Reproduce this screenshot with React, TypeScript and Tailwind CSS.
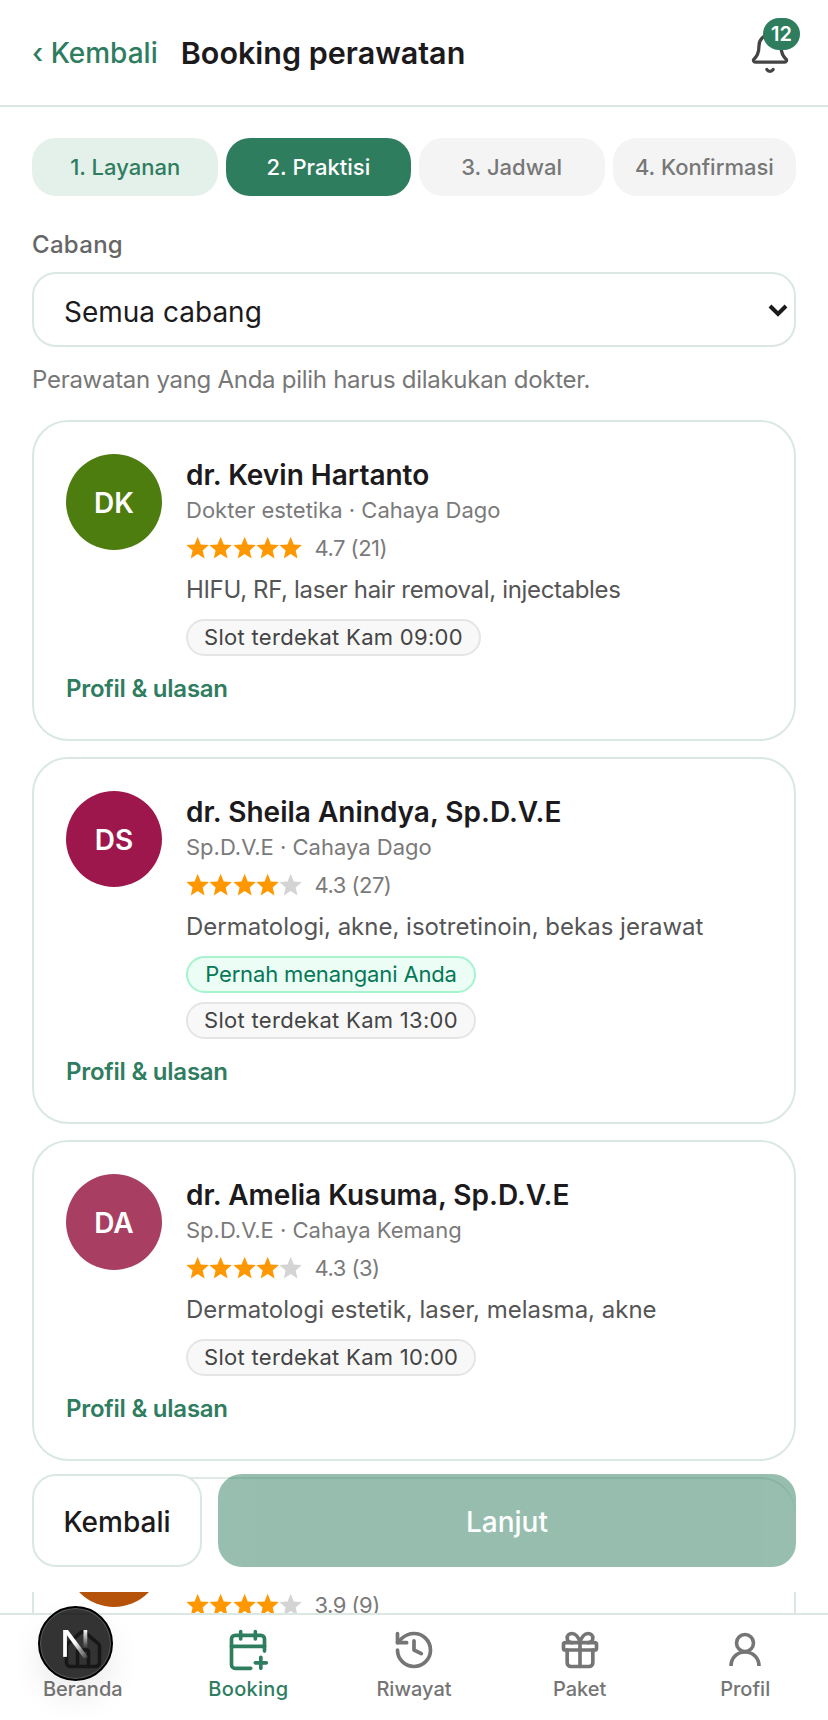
import { Bell, CalendarPlus, Gift, History, House } from 'lucide-react';
import type { ReactNode } from 'react';

type Doctor = {
  initials: string;
  name: string;
  role: string;
  stars: number;
  rating: string;
  specialties: string;
  specialtiesClass?: string;
  slot: string;
  treated?: boolean;
  avatar: string;
};

const doctors: Doctor[] = [
  {
    initials: 'DK',
    name: 'dr. Kevin Hartanto',
    role: 'Dokter estetika · Cahaya Dago',
    stars: 5,
    rating: '4.7 (21)',
    specialties: 'HIFU, RF, laser hair removal, injectables',
    specialtiesClass: 'tracking-[-0.34px]',
    slot: 'Slot terdekat Kam 09:00',
    avatar: 'bg-[#4d7c0f]',
  },
  {
    initials: 'DS',
    name: 'dr. Sheila Anindya, Sp.D.V.E',
    role: 'Sp.D.V.E · Cahaya Dago',
    stars: 4,
    rating: '4.3 (27)',
    specialties: 'Dermatologi, akne, isotretinoin, bekas jerawat',
    slot: 'Slot terdekat Kam 13:00',
    treated: true,
    avatar: 'bg-[#9d174d]',
  },
  {
    initials: 'DA',
    name: 'dr. Amelia Kusuma, Sp.D.V.E',
    role: 'Sp.D.V.E · Cahaya Kemang',
    stars: 4,
    rating: '4.3 (3)',
    specialties: 'Dermatologi estetik, laser, melasma, akne',
    slot: 'Slot terdekat Kam 10:00',
    avatar: 'bg-[#a83f63]',
  },
  {
    initials: 'DR',
    name: 'dr. Rendra Pratama',
    role: 'Dokter estetika · Cahaya Kemang',
    stars: 4,
    rating: '3.9 (9)',
    specialties: 'Laser, peeling, injectables',
    slot: 'Slot terdekat Kam 11:00',
    avatar: 'bg-[#b45309]',
  },
];

function Stars({ count }: { count: number }) {
  return (
    <div className="flex">
      {[0, 1, 2, 3, 4].map((i) => (
        <svg key={i} viewBox="0 0 24 24" className={`h-[24px] w-[23.3px] ${i < count ? 'fill-[#ff9800]' : 'fill-[#d4d4d4]'}`}>
          <path d="M12 .5l3.2 7.8 8.4.7-6.4 5.5 1.9 8.2-7.1-4.4-7.1 4.4 1.9-8.2L.4 9l8.4-.7z" />
        </svg>
      ))}
    </div>
  );
}

function DoctorCard({ doctor }: { doctor: Doctor }) {
  return (
    <div className="rounded-[36px] border-2 border-[#dbe8e2] bg-white px-[32px] pt-[32px] pb-[33px]">
      <div className="flex gap-[24px]">
        <div className={`flex h-[96px] w-[96px] shrink-0 items-center justify-center rounded-full pt-[2px] text-[28px] font-semibold text-white ${doctor.avatar}`}>
          {doctor.initials}
        </div>
        <div className="min-w-0 flex-1">
          <p className="text-[28px] leading-[43px] font-semibold text-[#1c1a1c]">{doctor.name}</p>
          <p className="text-[22px] leading-[26px] text-[#7a7a7a]">{doctor.role}</p>
          <div className="mt-[10px] flex h-[30px] items-center gap-[12px]">
            <Stars count={doctor.stars} />
            <span className="text-[22px] tracking-[-0.5px] text-[#7a7a7a]">{doctor.rating}</span>
          </div>
          <p className={`mt-[9px] text-[24px] leading-[36px] text-[#555555] ${doctor.specialtiesClass ?? ''}`}>{doctor.specialties}</p>
          <div className="mt-[11px] flex w-fit flex-col gap-[9px]">
            {doctor.treated && (
              <span className="flex h-[37px] items-center justify-center rounded-full border-2 border-[#a7f3d0] bg-[#ecfdf5] px-[16px] text-[22px] tracking-[-0.15px] text-[#047857]">
                Pernah menangani Anda
              </span>
            )}
            <span className="flex h-[37px] items-center justify-center rounded-full border-2 border-[#e5e5e5] bg-[#f8f8f8] px-[16px] text-[22px] tracking-[0.3px] text-[#444444]">
              {doctor.slot}
            </span>
          </div>
        </div>
      </div>
      <p className="mt-[16px] text-[24px] leading-[34px] font-semibold tracking-[-0.25px] text-[#2f7d5f]">Profil &amp; ulasan</p>
    </div>
  );
}

function NavItem({ icon, label, active }: { icon: ReactNode; label: string; active?: boolean }) {
  return (
    <div className={`flex flex-col items-center pt-[13px] ${active ? 'text-[#2f7d5f]' : 'text-[#757575]'}`}>
      {icon}
      <span className={`mt-[3px] text-[20px] leading-[28px] font-medium ${active ? 'tracking-[0.3px]' : ''}`}>{label}</span>
    </div>
  );
}

function ProfileIcon() {
  return (
    <svg viewBox="0 0 44 44" className="h-[44px] w-[44px] fill-none stroke-current stroke-[3.6]">
      <circle cx="22" cy="15" r="8.5" />
      <path d="M8 38c0-8 6-14 14-14s14 6 14 14" />
    </svg>
  );
}

export default function App() {
  const steps = ['1. Layanan', '2. Praktisi', '3. Jadwal', '4. Konfirmasi'];
  const stepStyles = ['bg-[#e4f1eb] text-[#2f7d5f]', 'bg-[#2f7d5f] text-white', 'bg-[#f4f4f4] text-[#777777]', 'bg-[#f4f4f4] text-[#777777]'];

  return (
    <div className="relative h-[1720px] overflow-hidden bg-white font-[Inter,sans-serif]">
      {/* Header */}
      <header className="flex h-[107px] items-center border-b-2 border-[#dbe8e2] px-[32px]">
        <span className="text-[28px] font-medium text-[#2f7d5f]">‹ Kembali</span>
        <h1 className="ml-[23px] text-[30.5px] font-semibold text-[#1c1a1c]">Booking perawatan</h1>
        <div className="relative mr-[4px] ml-auto h-[44px] w-[44px]">
          <Bell size={44} strokeWidth={1.8} className="text-[#444444]" />
          <span className="absolute top-[-13px] left-[15px] flex h-[32px] w-[37px] items-center justify-center rounded-full bg-[#2f7d5f] text-[20px] font-semibold text-white">
            12
          </span>
        </div>
      </header>

      <main className="px-[32px] pt-[31px]">
        {/* Steps */}
        <div className="grid grid-cols-[186fr_184fr_186fr_183fr] gap-[8px]">
          {steps.map((step, i) => (
            <div key={step} className={`flex h-[58px] items-center justify-center rounded-[24px] text-[22px] font-medium ${stepStyles[i]}`}>
              {step}
            </div>
          ))}
        </div>

        <p className="mt-[32px] text-[24px] leading-[34px] font-medium tracking-[0.3px] text-[#666666]">Cabang</p>
        <div className="relative mt-[10px]">
          <select className="h-[75px] w-full appearance-none rounded-[24px] border-2 border-[#dbe8e2] bg-white pt-[4px] pl-[30px] text-[28px] text-[#1c1a1c]">
            <option>Semua cabang</option>
          </select>
          <svg viewBox="0 0 20 14" className="pointer-events-none absolute top-[31px] right-[8px] h-[14px] w-[20px] fill-none stroke-[#1c1a1c] stroke-[4]">
            <path d="M2 3l8 8 8-8" />
          </svg>
        </div>
        <p className="mt-[16px] text-[24px] leading-[34px] tracking-[-0.28px] text-[#777777]">Perawatan yang Anda pilih harus dilakukan dokter.</p>

        <div className="mt-[23px] flex flex-col gap-[16px]">
          {doctors.map((doctor) => (
            <DoctorCard key={doctor.initials} doctor={doctor} />
          ))}
        </div>
      </main>

      {/* Floating actions */}
      <div className="absolute right-0 bottom-[128px] left-0 flex gap-[16px] bg-linear-to-t from-white from-[62%] to-transparent px-[32px] pb-[25px]">
        <button className="h-[93px] w-[170px] rounded-[24px] border-2 border-[#dbe8e2] bg-white pt-[2px] text-[28px] font-medium text-[#1c1a1c]">
          Kembali
        </button>
        <button className="h-[93px] flex-1 rounded-[24px] bg-[#2f7d5f] pt-[2px] text-[28px] font-medium text-white opacity-50">Lanjut</button>
      </div>

      {/* Bottom nav */}
      <nav className="absolute right-0 bottom-0 left-0 grid h-[107px] grid-cols-5 border-t-2 border-[#dbe8e2] bg-white">
        <NavItem icon={<House size={44} strokeWidth={2} />} label="Beranda" />
        <NavItem icon={<CalendarPlus size={44} strokeWidth={2} />} label="Booking" active />
        <NavItem icon={<History size={44} strokeWidth={2} />} label="Riwayat" />
        <NavItem icon={<Gift size={44} strokeWidth={2} />} label="Paket" />
        <NavItem icon={<ProfileIcon />} label="Profil" />
      </nav>

      {/* Dev indicator */}
      <div className="absolute top-[1606px] left-[38px] flex h-[75px] w-[75px] items-center justify-center rounded-full border-2 border-black bg-black/80 shadow-[0_16px_32px_rgba(0,0,0,0.08)] ring-1 ring-white/20 ring-inset">
        <svg viewBox="0 0 26 28" className="h-[30px] w-[28px]">
          <defs>
            <linearGradient id="nDiag" x1="0" y1="0" x2="1" y2="1">
              <stop offset="0.45" stopColor="#ffffff" />
              <stop offset="1" stopColor="#ffffff" stopOpacity="0" />
            </linearGradient>
            <linearGradient id="nBar" x1="0" y1="0" x2="0" y2="1">
              <stop offset="0" stopColor="#ffffff" />
              <stop offset="1" stopColor="#ffffff" stopOpacity="0" />
            </linearGradient>
          </defs>
          <rect x="1" y="1" width="3.5" height="25" fill="#ffffff" />
          <polygon points="1,1 5.5,1 25,27 20,27" fill="url(#nDiag)" />
          <rect x="20" y="1" width="3.5" height="17" fill="url(#nBar)" />
        </svg>
      </div>
    </div>
  );
}
